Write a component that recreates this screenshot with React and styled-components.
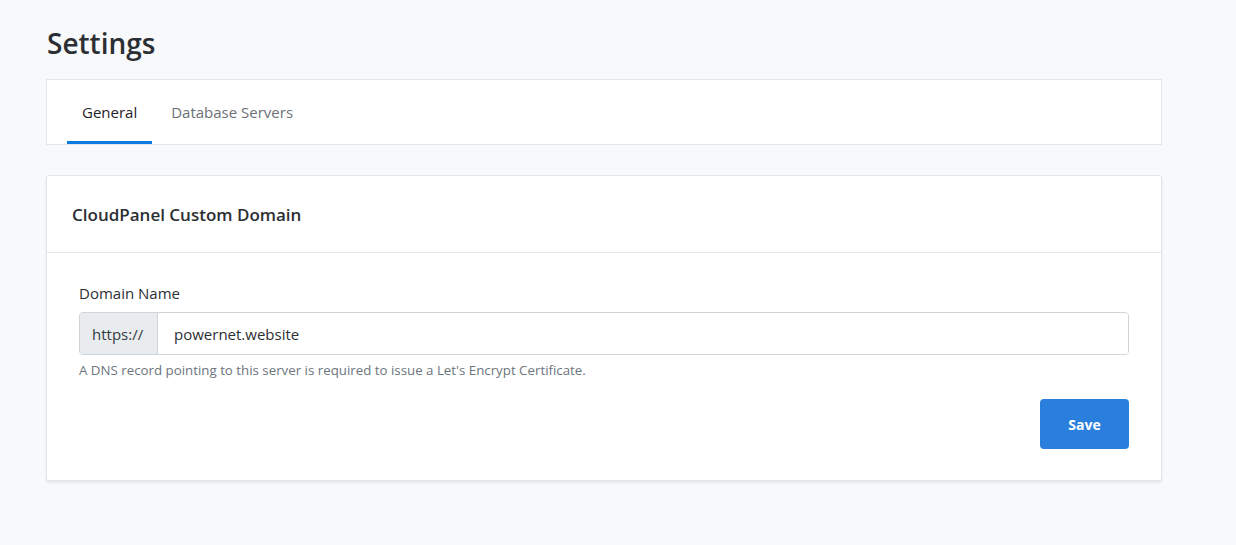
import React from 'react';
import styled, { createGlobalStyle } from 'styled-components';

const GlobalStyle = createGlobalStyle`
    html, body {
        margin: 0;
        padding: 0;
        background: #f8f9fa;
        font-family: "Open Sans", "Noto Sans", sans-serif;
        color: #343a40;
    }
`;

const Page = styled.div`
    width: 1116px;
    padding: 24px 0 60px 46px;
`;

const Title = styled.h1`
    margin: 0 0 17px 1px;
    font-size: 28px;
    font-weight: 600;
    line-height: 38px;
    color: #2b2f33;
`;

const TabBar = styled.div`
    display: flex;
    gap: 4px;
    padding: 0 20px;
    background: #fff;
    border: 1px solid #e3e5e8;
    height: 64px;
    margin-bottom: 30px;
`;

const Tab = styled.div`
    display: flex;
    align-items: center;
    padding: 0 15px;
    font-size: 15px;
    color: ${p => (p.active ? '#1f2328' : '#6c7075')};
    border-bottom: 3px solid ${p => (p.active ? '#0a7be0' : 'transparent')};
    padding-top: 2px;
`;

const Card = styled.div`
    background: #fff;
    border: 1px solid #e3e5e8;
    border-radius: 3px;
    box-shadow: 0 2px 3px rgba(0, 0, 0, 0.08);
`;

const CardHeader = styled.div`
    height: 76px;
    display: flex;
    align-items: center;
    padding: 0 25px;
    border-bottom: 1px solid #e3e5e8;
    font-size: 17px;
    font-weight: 600;
    color: #2b2f33;
`;

const CardBody = styled.div`
    padding: 29px 32px 31px 32px;
`;

const Label = styled.div`
    font-size: 15px;
    color: #2b2f33;
    margin-bottom: 8px;
    line-height: 22px;
`;

const InputGroup = styled.div`
    display: flex;
    height: 41px;
    border: 1px solid #ced4da;
    border-radius: 4px;
    overflow: hidden;
`;

const Prefix = styled.div`
    display: flex;
    align-items: center;
    padding: 0 12px;
    width: 53px;
    background: #e9ecef;
    border-right: 1px solid #ced4da;
    font-size: 15px;
    color: #343a40;
`;

const Input = styled.input`
    flex: 1;
    border: none;
    outline: none;
    padding: 0 16px;
    font-family: inherit;
    font-size: 15px;
    color: #2b2f33;
`;

const Help = styled.div`
    margin-top: 6px;
    font-size: 13.3px;
    color: #6c757d;
    line-height: 18px;
`;

const Actions = styled.div`
    display: flex;
    justify-content: flex-end;
    margin-top: 20px;
`;

const Button = styled.button`
    width: 89px;
    height: 50px;
    border: none;
    border-radius: 4px;
    background: #2a7fdc;
    color: #fff;
    font-family: inherit;
    font-size: 14px;
    font-weight: 700;
`;

const App = () => (
    <>
        <GlobalStyle />
        <Page>
            <Title>Settings</Title>
            <TabBar>
                <Tab active>General</Tab>
                <Tab>Database Servers</Tab>
            </TabBar>
            <Card>
                <CardHeader>CloudPanel Custom Domain</CardHeader>
                <CardBody>
                    <Label>Domain Name</Label>
                    <InputGroup>
                        <Prefix>https://</Prefix>
                        <Input defaultValue="powernet.website" />
                    </InputGroup>
                    <Help>A DNS record pointing to this server is required to issue a Let's Encrypt Certificate.</Help>
                    <Actions>
                        <Button>Save</Button>
                    </Actions>
                </CardBody>
            </Card>
        </Page>
    </>
);

export default App;
